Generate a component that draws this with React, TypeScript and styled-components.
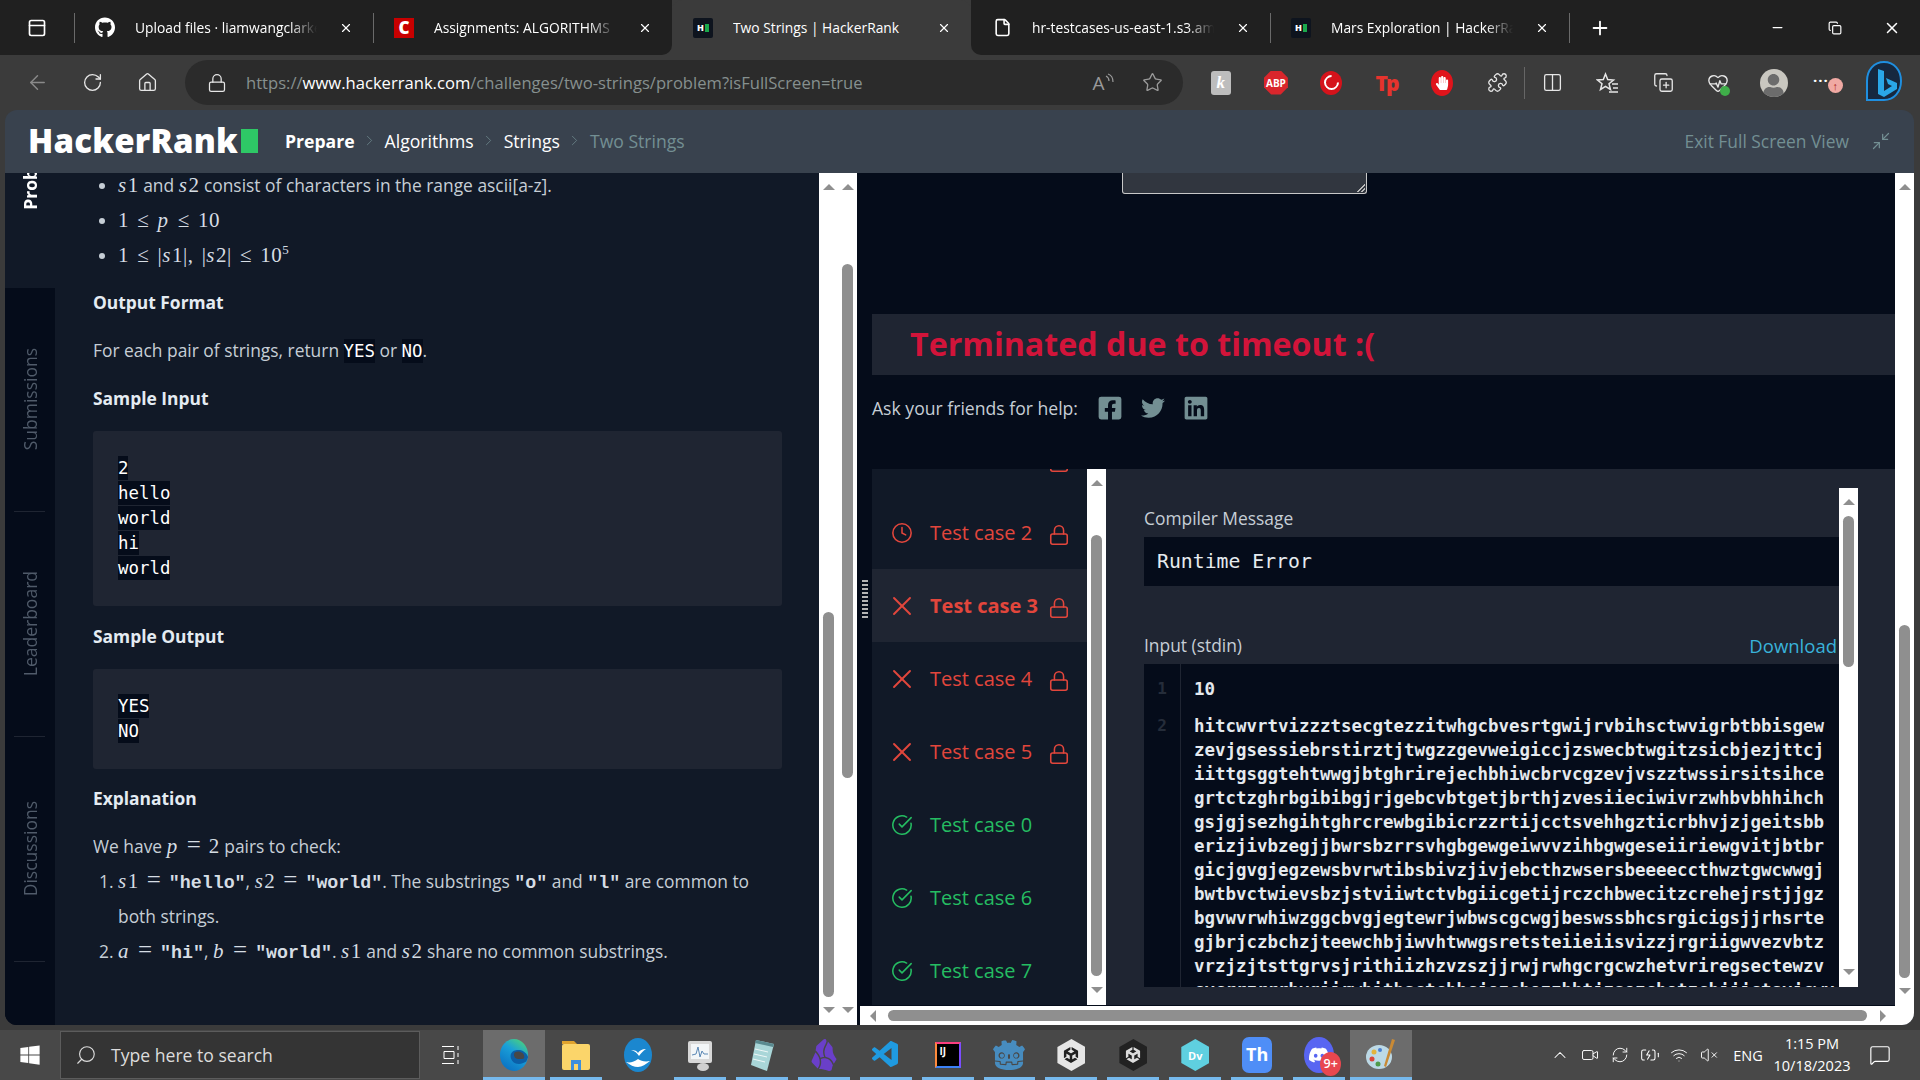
import * as React from 'react';
import styled, { createGlobalStyle } from 'styled-components';
import {
  ArrowLeft, RotateCw, Home, Lock, Star, Puzzle, Columns2, Plus, Minus, X, Copy,
  Clock, CircleCheckBig, ChevronRight, Minimize2, File, PanelTop, Search, ChevronUp,
  Video, Wifi, VolumeX, MessageSquare, HeartPulse, CopyPlus, BatteryCharging, RefreshCw,
} from 'lucide-react';
import { FaGithub, FaWindows, FaFacebookSquare, FaTwitter, FaLinkedin, FaHandPaper, FaUser } from 'react-icons/fa';
import { SiObsidian, SiGodotengine, SiUnity, SiDiscord } from 'react-icons/si';
import { VscVscode } from 'react-icons/vsc';

const chrome = '#3b3b3b';
const chromeDark = '#202020';
const pane = '#111927';
const ink = '#050c1a';
const raised = '#1f2532';
const muted = '#738f93';
const body = '#c6ced6';
const red = '#e2463c';
const green = '#25bd62';
const sans = '"Open Sans", "Noto Sans", sans-serif';
const mono = '"DejaVu Sans Mono", "Liberation Mono", monospace';
const serif = '"Liberation Serif", serif';

const GlobalStyle = createGlobalStyle`
  html, body { margin: 0; height: 100%; background: ${chrome}; overflow: hidden; }
  * { box-sizing: border-box; }
`;

const Screen = styled.div`
  width: 1920px;
  height: 1080px;
  display: flex;
  flex-direction: column;
  font-family: ${sans};
  overflow: hidden;
`;

/* browser tab strip */
const TabBar = styled.div`
  height: 55px;
  display: flex;
  flex: none;
  color: #fff;
`;
const SideSlot = styled.div`
  width: 74px;
  display: flex;
  align-items: center;
  justify-content: center;
  background: ${chromeDark};
`;
const Tab = styled.div<{ $active?: boolean; $sep?: boolean; $roundL?: boolean; $roundR?: boolean }>`
  position: relative;
  width: 299px;
  display: flex;
  align-items: center;
  padding: 0 20px 0 21px;
  background: ${(p) => (p.$active ? chrome : chromeDark)};
  border-radius: ${(p) => (p.$active ? '10px 10px 0 0' : '0')};
  border-bottom-right-radius: ${(p) => (p.$roundR ? '10px' : '')};
  border-bottom-left-radius: ${(p) => (p.$roundL ? '10px' : '')};
  &::before {
    content: '';
    display: ${(p) => (p.$sep ? 'block' : 'none')};
    position: absolute;
    left: 0;
    top: 13px;
    height: 30px;
    width: 1px;
    background: #6a6a6a;
  }
`;
const TabIcon = styled.div`
  width: 20px;
  height: 20px;
  flex: none;
  display: flex;
  align-items: center;
  justify-content: center;
  margin-right: 20px;
`;
const TabTitle = styled.div<{ $fade?: boolean }>`
  flex: 1;
  font-size: 13.8px;
  white-space: nowrap;
  overflow: hidden;
  margin-right: 22px;
  mask-image: ${(p) => (p.$fade ? 'linear-gradient(90deg, #000 85%, transparent)' : 'none')};
`;
const HrIcon = styled.div`
  width: 20px;
  height: 20px;
  background: #0e141e;
  border-radius: 2px;
  display: flex;
  align-items: center;
  justify-content: center;
  gap: 1px;
  font: 800 9px ${sans};
  color: #fff;
  &::after {
    content: '';
    width: 4px;
    height: 8px;
    background: #1ba94c;
  }
`;
const CanvasIcon = styled.div`
  width: 20px;
  height: 20px;
  background: #c80000;
  color: #fff;
  font: 800 17px/20px ${sans};
  text-align: center;
`;
const NewTab = styled.div`
  width: 62px;
  display: flex;
  align-items: center;
  justify-content: center;
  position: relative;
  background: ${chromeDark};
  &::before {
    content: '';
    position: absolute;
    left: 0;
    top: 13px;
    height: 30px;
    width: 1px;
    background: #6a6a6a;
  }
`;
const TabFill = styled.div`
  flex: 1;
  background: ${chromeDark};
`;
const WinButton = styled.div`
  width: 57px;
  display: flex;
  align-items: center;
  justify-content: center;
  background: ${chromeDark};
`;

/* address bar row */
const Toolbar = styled.div`
  height: 55px;
  flex: none;
  display: flex;
  align-items: center;
  padding-left: 10px;
  color: #e6e6e6;
`;
const NavButton = styled.div<{ $dim?: boolean }>`
  width: 55px;
  display: flex;
  justify-content: center;
  color: ${(p) => (p.$dim ? '#8a8a8a' : '#e6e6e6')};
`;
const Address = styled.div`
  margin-left: 10px;
  width: 998px;
  height: 45px;
  border-radius: 23px;
  background: #2b2b2b;
  display: flex;
  align-items: center;
  padding: 0 6px 0 22px;
`;
const Url = styled.div`
  flex: 1;
  margin-left: 19px;
  font-size: 16.6px;
  color: #86908f;
  white-space: nowrap;
  b {
    font-weight: 400;
    color: #fff;
  }
`;
const AddressAction = styled.div`
  width: 49px;
  display: flex;
  justify-content: center;
  align-items: flex-end;
  color: #9a9a9a;
  font-size: 19px;
  line-height: 24px;
`;
const ExtRow = styled.div`
  margin-left: 10px;
  display: flex;
`;
const Ext = styled.div<{ $sep?: boolean }>`
  position: relative;
  width: 55.3px;
  height: 40px;
  display: flex;
  align-items: center;
  justify-content: center;
  &::after {
    content: '';
    display: ${(p) => (p.$sep ? 'block' : 'none')};
    position: absolute;
    right: 0;
    top: 4px;
    bottom: 4px;
    width: 1px;
    background: #666;
  }
`;
const KeyIcon = styled.div`
  width: 20px;
  height: 24px;
  border-radius: 3px;
  background: #bdbdbd;
  color: #fff;
  font: italic 700 17px/24px ${serif};
  text-align: center;
`;
const AbpIcon = styled.div`
  width: 24px;
  height: 24px;
  background: #d9262c;
  clip-path: polygon(30% 0, 70% 0, 100% 30%, 100% 70%, 70% 100%, 30% 100%, 0 70%, 0 30%);
  color: #fff;
  font: 700 10px/24px ${sans};
  text-align: center;
`;
const RedBadge = styled.div`
  width: 22px;
  height: 24px;
  border-radius: 50%;
  background: #d5131b;
  display: flex;
  align-items: center;
  justify-content: center;
  &::after {
    content: '';
    width: 11px;
    height: 11px;
    border-radius: 50%;
    border: 2.5px solid #fff;
    border-right-color: transparent;
    transform: rotate(-45deg);
  }
`;
const TpIcon = styled.div`
  color: #e6332d;
  font: 800 21px/24px ${sans};
  letter-spacing: -2px;
`;
const HandIcon = styled.div`
  width: 22px;
  height: 26px;
  border-radius: 50%;
  background: #e0141b;
  color: #fff;
  display: flex;
  align-items: center;
  justify-content: center;
`;
const HealthIcon = styled.div`
  position: relative;
  display: flex;
  &::after {
    content: '';
    position: absolute;
    right: -1px;
    bottom: -2px;
    width: 10px;
    height: 10px;
    border-radius: 50%;
    background: #3fae49;
  }
`;
const Avatar = styled.div`
  width: 28px;
  height: 28px;
  border-radius: 50%;
  background: #c9c7c0;
  color: #6c6c6c;
  overflow: hidden;
  display: flex;
  align-items: flex-end;
  justify-content: center;
`;
const MoreDots = styled.div`
  position: relative;
  color: #fff;
  font: 700 15px/10px ${sans};
  letter-spacing: 1px;
  margin: -6px 8px 0 -8px;
`;
const UpdateBadge = styled.div`
  position: absolute;
  right: -14px;
  top: 3px;
  width: 15px;
  height: 15px;
  border-radius: 50%;
  background: #f0a9a3;
  color: #a22;
  font: 700 11px/15px ${sans};
  letter-spacing: 0;
  text-align: center;
`;

/* hackerrank window */
const Page = styled.div`
  width: 1909px;
  height: 915px;
  margin-left: 5px;
  flex: none;
  display: flex;
  flex-direction: column;
  border-radius: 12px;
  overflow: hidden;
`;
const Header = styled.header`
  height: 63px;
  flex: none;
  background: #39424e;
  display: flex;
  align-items: center;
  padding: 0 23px 2px 23px;
`;
const Logo = styled.div`
  display: flex;
  align-items: center;
  color: #fff;
  font: 800 33px/1 ${sans};
  letter-spacing: 0.2px;
  margin-right: 27px;
  &::after {
    content: '';
    width: 17px;
    height: 24px;
    margin-left: 3px;
    background: #2ec866;
  }
`;
const Crumb = styled.span<{ $bold?: boolean; $dim?: boolean }>`
  color: ${(p) => (p.$dim ? muted : '#fff')};
  font-size: 17.6px;
  font-weight: ${(p) => (p.$bold ? 700 : 400)};
`;
const CrumbArrow = styled.span`
  display: flex;
  margin: 0 6.5px;
  color: ${muted};
`;
const HeaderFill = styled.div`
  flex: 1;
`;
const ExitLink = styled.span`
  color: ${muted};
  font-size: 17.4px;
  margin-right: 22px;
`;
const Content = styled.div`
  flex: 1;
  min-height: 0;
  display: flex;
  background: ${ink};
`;

/* vertical tabs on the far left */
const SideNav = styled.nav`
  width: 50px;
  flex: none;
  display: flex;
  flex-direction: column;
  background: ${ink};
`;
const ActiveSide = styled.div`
  height: 115px;
  flex: none;
  overflow: hidden;
  background: ${pane};
  display: flex;
  align-items: flex-end;
  justify-content: center;
  padding-bottom: 78px;
`;
const SideLabel = styled.div<{ $active?: boolean }>`
  writing-mode: vertical-rl;
  transform: rotate(180deg);
  white-space: nowrap;
  font-size: 17.5px;
  font-weight: ${(p) => (p.$active ? 700 : 400)};
  color: ${(p) => (p.$active ? '#fff' : '#505b6a')};
`;
const SideItem = styled.div`
  height: 225px;
  flex: none;
  border-bottom: 1px solid transparent;
  position: relative;
  display: flex;
  align-items: center;
  justify-content: center;
  padding-bottom: 2px;
  &::after {
    content: '';
    position: absolute;
    left: 9px;
    right: 10px;
    bottom: 0;
    height: 1px;
    background: #1f2532;
  }
`;

/* problem statement */
const Statement = styled.div`
  width: 764px;
  flex: none;
  overflow: hidden;
  background: ${pane};
  padding: 0 37px 0 38px;
  color: ${body};
  font-size: 17.4px;
  line-height: 35px;
`;
const BulletList = styled.ul`
  margin: -5px 0 0;
  padding-left: 25px;
`;
const NumberList = styled.ol`
  margin: 0;
  padding-left: 25px;
`;
const Heading = styled.h4`
  margin: 12px 0 13px;
  font-size: 17.4px;
  line-height: 35px;
  font-weight: 700;
  color: #e4ebf2;
`;
const Para = styled.p`
  margin: 13px 0 0;
`;
const Code = styled.code`
  font-family: ${mono};
  font-size: 17.4px;
  color: #fff;
  background: ${ink};
  padding: 2px 0;
`;
const SampleBox = styled.pre`
  margin: 15px 0 12.5px;
  padding: 25px;
  background: ${raised};
  border-radius: 3px;
  font-family: ${mono};
  font-size: 17.4px;
  line-height: 25px;
  color: #fff;
  span {
    background: ${ink};
    padding: 2px 0;
  }
`;
const M = styled.span`
  font-family: ${serif};
  font-size: 21px;
  line-height: 0;
  word-spacing: 2.5px;
  letter-spacing: 0.5px;
  color: #d6dde4;
  i {
    padding-right: 1px;
  }
  sup {
    font-size: 13px;
    line-height: 0;
  }
`;
const Eq = styled.span`
  font-family: ${serif};
  font-size: 25px;
  line-height: 0;
  margin: 0 8px;
  color: #d6dde4;
`;
const Tt = styled.span`
  font-family: "Liberation Mono", monospace;
  font-weight: 700;
  font-size: 18.3px;
  line-height: 0;
  color: #d6dde4;
`;

/* scrollbars */
const VBar = styled.div`
  width: 19px;
  flex: none;
  background: #fff;
  display: flex;
  flex-direction: column;
  align-items: center;
  padding: 11px 0 12px;
`;
const Arrow = styled.div<{ $dir: 'up' | 'down' | 'left' | 'right' }>`
  flex: none;
  width: 0;
  height: 0;
  border: 6px solid transparent;
  ${(p) =>
    p.$dir === 'up'
      ? `border-bottom: 6px solid #8f8f8f; border-top: 0;`
      : p.$dir === 'down'
      ? `border-top: 6px solid #8f8f8f; border-bottom: 0;`
      : p.$dir === 'left'
      ? `border-right: 6px solid #8f8f8f; border-left: 0;`
      : `border-left: 6px solid #8f8f8f; border-right: 0;`}
`;
const Track = styled.div`
  flex: 1;
  min-height: 0;
  width: 100%;
  display: flex;
  justify-content: center;
`;
const Thumb = styled.div<{ $top: number; $size: number }>`
  width: 11px;
  height: ${(p) => p.$size}px;
  margin-top: ${(p) => p.$top}px;
  border-radius: 6px;
  background: #8f8f8f;
`;
const HBar = styled.div`
  height: 19px;
  flex: none;
  margin-left: 3px;
  background: #fff;
  display: flex;
  align-items: center;
  padding: 0 28px 0 10px;
`;
const HThumb = styled.div`
  flex: 1;
  height: 11px;
  margin: 0 13px 0 12px;
  border-radius: 6px;
  background: #8f8f8f;
`;
const ScrollBar = ({ top, size }: { top: number; size: number }) => (
  <VBar>
    <Arrow $dir="up" />
    <Track>
      <Thumb $top={top} $size={size} />
    </Track>
    <Arrow $dir="down" />
  </VBar>
);

/* right hand column */
const Editor = styled.div`
  flex: 1;
  min-width: 0;
  display: flex;
  flex-direction: column;
`;
const EditorRow = styled.div`
  flex: 1;
  min-height: 0;
  display: flex;
`;
const EditorScroll = styled.div`
  flex: 1;
  min-width: 0;
  display: flex;
  flex-direction: column;
  overflow: hidden;
`;
const CustomInput = styled.div`
  width: 245px;
  height: 21px;
  flex: none;
  margin-left: 265px;
  position: relative;
  background: #31363f;
  border: 1px solid #c8c8c8;
  border-top: 0;
  border-radius: 0 0 3px 3px;
  &::after {
    content: '';
    position: absolute;
    right: 1px;
    bottom: 1px;
    width: 8px;
    height: 8px;
    background: linear-gradient(135deg, transparent 50%, #bbb 50%, #bbb 60%, transparent 60%, transparent 75%, #bbb 75%, #bbb 85%, transparent 85%);
  }
`;
const StatusBand = styled.div`
  height: 61px;
  flex: none;
  margin: 120px 0 0 15px;
  background: ${raised};
  padding: 0 0 2px 38px;
  display: flex;
  align-items: center;
  color: #d2143a;
  font-size: 32.2px;
  font-weight: 700;
`;
const ShareRow = styled.div`
  height: 24px;
  flex: none;
  margin: 21px 0 0 15px;
  display: flex;
  align-items: center;
  font-size: 17.6px;
  color: ${body};
  svg {
    color: ${muted};
    margin-right: 18px;
  }
  span {
    margin-right: 19px;
  }
`;
const ResultRow = styled.div`
  height: 536px;
  flex: none;
  margin-top: 49px;
  display: flex;
`;
const Handle = styled.div`
  width: 15px;
  flex: none;
  display: flex;
  justify-content: center;
  padding-top: 111px;
  &::after {
    content: '';
    width: 6px;
    height: 38px;
    background: repeating-linear-gradient(0deg, #b4b4b4 0 2px, transparent 2px 4px);
    border-left: 0;
  }
`;
const CaseList = styled.div`
  width: 215px;
  flex: none;
  overflow: hidden;
  background: ${pane};
`;
const CaseRow = styled.div<{ $state: 'fail' | 'pass'; $selected?: boolean; $first?: boolean }>`
  height: 73px;
  margin-top: ${(p) => (p.$first ? '-46px' : '0')};
  display: flex;
  align-items: center;
  padding-left: 20px;
  background: ${(p) => (p.$selected ? raised : 'transparent')};
  color: ${(p) => (p.$state === 'fail' ? red : green)};
  font-size: 20px;
  font-weight: ${(p) => (p.$selected ? 700 : 400)};
`;
const CaseIcon = styled.div`
  width: 20px;
  display: flex;
  justify-content: center;
  margin-right: 18px;
  svg {
    flex: none;
  }
`;
const CaseName = styled.div`
  width: 118px;
  white-space: nowrap;
`;
const CaseLock = styled.div`
  display: flex;
  margin-top: 4px;
`;
const Detail = styled.div`
  flex: 1;
  min-width: 0;
  display: flex;
  background: ${raised};
  padding: 19px 37px 18px 38px;
`;
const DetailBody = styled.div`
  flex: 1;
  min-width: 0;
  display: flex;
  flex-direction: column;
  overflow: hidden;
`;
const FieldLabel = styled.div<{ $gap: number }>`
  height: 24px;
  flex: none;
  margin-top: ${(p) => p.$gap}px;
  display: flex;
  justify-content: space-between;
  align-items: center;
  font-size: 17.4px;
  color: ${body};
`;
const Download = styled.span`
  color: #39b3da;
  font-size: 18.5px;
  margin-right: 2px;
`;
const CompilerBox = styled.div`
  height: 49px;
  flex: none;
  margin-top: 7px;
  background: ${ink};
  padding-left: 13px;
  display: flex;
  align-items: center;
  font: 19.8px ${mono};
  color: #e6ebef;
  white-space: pre;
`;
const CodeBox = styled.div`
  flex: 1;
  min-height: 0;
  margin-top: 7px;
  background: ${ink};
  overflow: hidden;
`;
const CodeLine = styled.div`
  display: flex;
`;
const LineNo = styled.div`
  width: 37px;
  flex: none;
  padding-top: 13px;
  border-right: 1px solid ${raised};
  text-align: center;
  font: 700 16px/24px ${mono};
  color: #252d3a;
`;
const LineText = styled.div`
  padding: 13px 0 0 13px;
  font: 700 17.45px/24px ${mono};
  color: #e4e9ee;
  white-space: pre;
`;

/* windows task bar */
const Taskbar = styled.div`
  height: 50px;
  flex: none;
  margin-top: 5px;
  padding-right: 15px;
  display: flex;
  align-items: center;
  background: #484848;
  color: #fff;
`;
const StartButton = styled.div`
  width: 60px;
  display: flex;
  justify-content: center;
`;
const SearchBox = styled.div`
  width: 360px;
  height: 48px;
  display: flex;
  align-items: center;
  padding-left: 14px;
  background: #343434;
  border: 1px solid #5c5c5c;
  color: #dcdcdc;
  font-size: 17.6px;
  svg {
    transform: scaleX(-1);
  }
  span {
    margin-left: 14px;
  }
`;
const TaskView = styled.div`
  width: 63px;
  display: flex;
  justify-content: center;
`;
const TaskItem = styled.div<{ $active?: boolean; $running?: boolean }>`
  width: 61.95px;
  height: 50px;
  display: flex;
  align-items: center;
  justify-content: center;
  position: relative;
  background: ${(p) => (p.$active ? '#6c6c6c' : 'transparent')};
  &::after {
    content: '';
    display: ${(p) => (p.$running ? 'block' : 'none')};
    position: absolute;
    left: ${(p) => (p.$active ? '0' : '5px')};
    right: ${(p) => (p.$active ? '0' : '5px')};
    bottom: 0;
    height: 3px;
    background: #76b9ed;
  }
`;
const IjIcon = styled.div`
  width: 26px;
  height: 26px;
  background: #000;
  border: 2px solid;
  border-color: #fc3f7f #7c4dff #3b82f6 #ff8a3c;
  color: #fff;
  font: 700 10px/14px ${sans};
  padding-left: 3px;
`;
const HexBadge = styled.div<{ $color: string }>`
  width: 28px;
  height: 32px;
  background: ${(p) => p.$color};
  clip-path: polygon(50% 0, 100% 25%, 100% 75%, 50% 100%, 0 75%, 0 25%);
  display: flex;
  align-items: center;
  justify-content: center;
  color: #fff;
  font: 700 11px ${sans};
`;
const ThIcon = styled.div`
  width: 30px;
  height: 36px;
  border-radius: 7px;
  background: #4f8ef7;
  color: #fff;
  font: 700 18px/34px ${sans};
  text-align: center;
`;
const DiscordIcon = styled.div`
  position: relative;
  width: 30px;
  height: 36px;
  border-radius: 50%;
  background: #5865f2;
  color: #fff;
  display: flex;
  align-items: center;
  justify-content: center;
`;
const CountBadge = styled.div`
  position: absolute;
  right: -7px;
  bottom: -3px;
  width: 21px;
  height: 24px;
  border-radius: 50%;
  background: #e8474f;
  color: #fff;
  font: 600 12.5px/24px ${sans};
  text-align: center;
`;
const Tray = styled.div`
  margin-left: auto;
  display: flex;
  align-items: center;
`;
const TrayIcon = styled.div`
  width: 29.8px;
  display: flex;
  justify-content: center;
`;
const Lang = styled.div`
  width: 48px;
  text-align: center;
  font-size: 14.5px;
`;
const Clock2 = styled.div`
  width: 80px;
  text-align: center;
  font-size: 14.5px;
  line-height: 22px;
`;
const Notify = styled.div`
  width: 50px;
  margin-left: 3px;
  display: flex;
  justify-content: center;
`;

const EdgeLogo = ({ size }: { size: number }) => (
  <svg width={size} height={size + 4} viewBox="0 0 32 36">
    <defs>
      <linearGradient id="eg" x1="0.2" y1="1" x2="0.8" y2="0">
        <stop offset="0" stopColor="#0a6fc2" />
        <stop offset="0.6" stopColor="#1aa0d8" />
        <stop offset="1" stopColor="#4cd37a" />
      </linearGradient>
    </defs>
    <ellipse cx="16" cy="18" rx="15" ry="17" fill="url(#eg)" />
    <path d="M31 20c-3-7-9-8-13-7-6 1-7 7-4 11 3 4 9 5 15 1-1 2 1-2 2-5z" fill="#0b5fa8" />
    <path d="M17 15c5-2 10 1 10 5 0 2-3 3-8 2-3-1-4-5-2-7z" fill="#484848" />
  </svg>
);
const FolderLogo = () => (
  <svg width="30" height="36" viewBox="0 0 30 36">
    <path d="M1 4h12l3 3h-15z" fill="#e0a32e" />
    <rect x="1" y="7" width="28" height="26" rx="2" fill="#fbd56a" />
    <path d="M10 33V23h10v10h-3v-6h-4v6z" fill="#3d8fdc" />
  </svg>
);
const BirdLogo = () => (
  <svg width="30" height="36" viewBox="0 0 30 36">
    <ellipse cx="15" cy="18" rx="14" ry="17" fill="#1b87cf" />
    <path d="M8 13c4 0 6 1 7 3 1-2 4-4 8-4-3 2-5 4-7 7-2-3-4-5-8-6zM3 25c4 1 8 0 12-3 3 2 7 3 12 2-4 3-8 6-12 6s-8-2-12-5z" fill="#fff" />
  </svg>
);
const MonitorLogo = () => (
  <svg width="30" height="36" viewBox="0 0 30 36">
    <rect x="3" y="4" width="24" height="22" rx="2" fill="#d8d8d8" />
    <rect x="6" y="7" width="18" height="15" fill="#f3f6f8" />
    <path d="M7 18l4-1 2-7 2 10 2-6 2 3 4 0" stroke="#5b88b5" fill="none" />
    <ellipse cx="18" cy="30" rx="6" ry="4" fill="#cfcfcf" />
  </svg>
);
const NoteLogo = () => (
  <svg width="30" height="36" viewBox="0 0 30 36">
    <path d="M9 3l18 4-7 27-16-6z" fill="#a9d6d8" />
    <path d="M9 3l18 4-1 3-18-4z" fill="#5a8a90" />
    <path d="M8 12l13 3M7 17l13 3M6 22l12 3" stroke="#eef7f7" />
  </svg>
);
const PaletteLogo = () => (
  <svg width="32" height="36" viewBox="0 0 32 36">
    <ellipse cx="14" cy="20" rx="13" ry="12" fill="#bcd9e6" />
    <circle cx="9" cy="15" r="2.5" fill="#e3b33c" />
    <circle cx="7" cy="22" r="2.5" fill="#d9453a" />
    <circle cx="13" cy="27" r="2.5" fill="#4f9a4a" />
    <circle cx="15" cy="13" r="2" fill="#4a7fd0" />
    <path d="M27 2l3 1-9 27-2-1z" fill="#c98a35" />
  </svg>
);
const BingLogo = () => (
  <svg width="40" height="46" viewBox="0 0 40 46">
    <path d="M20 2c10 0 17 8 17 19s-7 19-17 19H3V21C3 10 10 2 20 2z" fill="#16283f" stroke="#1f8fe0" strokeWidth="2" />
    <path d="M14 9l6 2v20l8-5-4-2-2-6 11 5v6l-13 8-6-3z" fill="#2aa7e8" />
  </svg>
);
const TaskViewIcon = () => (
  <svg width="20" height="20" viewBox="0 0 20 20" fill="none" stroke="#fff">
    <path d="M0 1.5h12M0 18.5h12M2 6.5h10v7H2zM16 1v4M16 8v4M16 15v4" />
  </svg>
);
const ReadAloudWaves = () => (
  <svg width="10" height="22" viewBox="0 0 10 22" fill="none" stroke="#9a9a9a" strokeWidth="1.2">
    <path d="M1 3c2 1 3 3 3 5M3 1c3 1 5 4 5 8" />
  </svg>
);
const FavoritesIcon = () => (
  <svg width="24" height="24" viewBox="0 0 24 24" fill="none" stroke="#e6e6e6" strokeWidth="1.5">
    <path d="M9.5 3l2.2 5.6 5.8.4-4.5 3.7 1.5 5.8-5-3.2-5 3.2 1.5-5.8L1.5 9l5.8-.4z" />
    <path d="M16 13h6M17 17h5M13 21h9" />
  </svg>
);

const inputLines = [
  'hitcwvrtvizzztsecgtezzitwhgcbvesrtgwijrvbihsctwvigrbtbbisgew',
  'zevjgsessiebrstirztjtwgzzgevweigiccjzswecbtwgitzsicbjezjttcj',
  'iittgsggtehtwwgjbtghrirejechbhiwcbrvcgzevjvszztwssirsitsihce',
  'grtctzghrbgibibgjrjgebcvbtgetjbrthjzvesiieciwivrzwhbvbhhihch',
  'gsjgjsezhgihtghrcrewbgibicrzzrtijcctsvehhgzticrbhvjzjgeitsbb',
  'erizjivbzegjjbwrsbzrrsvhgbgewgeiwvvzihbgwgeseiiriewgvitjbtbr',
  'gicjgvgjegzewsbvrwtibsbivzjivjebcthzwsersbeeeeccthwztgwcwwgj',
  'bwtbvctwievsbzjstviiwtctvbgiicgetijrczchbwecitzcrehejrstjjgz',
  'bgvwvrwhiwzggcbvgjegtewrjwbwscgcwgjbeswssbhcsrgicigsjjrhsrte',
  'gjbrjczbchzjteewchbjiwvhtwwgsretsteiieiisvizzjrgriigwvezvbtz',
  'vrzjzjtsttgrvsjrithiizhzvzszjjrwjrwhgcrgcwzhetvriregsectewzv',
  'cvcrrzrrrbvgiirwhithsctchbcjezchezzhbtjzsezchetzchjjjctsvjcwv',
];

const cases = [
  { name: 'Test case 2', icon: 'clock', locked: true },
  { name: 'Test case 3', icon: 'x', locked: true, selected: true },
  { name: 'Test case 4', icon: 'x', locked: true },
  { name: 'Test case 5', icon: 'x', locked: true },
  { name: 'Test case 0', icon: 'check' },
  { name: 'Test case 6', icon: 'check' },
  { name: 'Test case 7', icon: 'check' },
];

const statusIcon = (icon: string) => {
  if (icon === 'clock') return <Clock size={22} strokeWidth={1.7} />;
  if (icon === 'x') return <X size={32} strokeWidth={1.4} />;
  return <CircleCheckBig size={22} strokeWidth={1.7} />;
};

const S1 = () => <M><i>s</i>1</M>;
const S2 = () => <M><i>s</i>2</M>;

export default function App() {
  return (
    <Screen>
      <GlobalStyle />
      <TabBar>
        <SideSlot>
          <PanelTop size={20} />
        </SideSlot>
        <Tab $sep>
          <TabIcon><FaGithub size={21} /></TabIcon>
          <TabTitle $fade>Upload files · liamwangclarke</TabTitle>
          <X size={14} />
        </Tab>
        <Tab $sep $roundR>
          <TabIcon><CanvasIcon>C</CanvasIcon></TabIcon>
          <TabTitle $fade>Assignments: ALGORITHMS</TabTitle>
          <X size={14} />
        </Tab>
        <Tab $active>
          <TabIcon><HrIcon>H</HrIcon></TabIcon>
          <TabTitle>Two Strings | HackerRank</TabTitle>
          <X size={14} />
        </Tab>
        <Tab $roundL>
          <TabIcon><File size={19} /></TabIcon>
          <TabTitle $fade>hr-testcases-us-east-1.s3.amazonaws</TabTitle>
          <X size={14} />
        </Tab>
        <Tab $sep>
          <TabIcon><HrIcon>H</HrIcon></TabIcon>
          <TabTitle $fade>Mars Exploration | HackerRank</TabTitle>
          <X size={14} />
        </Tab>
        <NewTab><Plus size={22} /></NewTab>
        <TabFill />
        <WinButton><Minus size={15} /></WinButton>
        <WinButton><Copy size={14} /></WinButton>
        <WinButton><X size={18} /></WinButton>
      </TabBar>

      <Toolbar>
        <NavButton $dim><ArrowLeft size={23} strokeWidth={1.5} /></NavButton>
        <NavButton><RotateCw size={21} strokeWidth={1.5} /></NavButton>
        <NavButton><Home size={21} strokeWidth={1.5} /></NavButton>
        <Address>
          <Lock size={20} strokeWidth={1.5} />
          <Url>https://<b>www.hackerrank.com</b>/challenges/two-strings/problem?isFullScreen=true</Url>
          <AddressAction>A<ReadAloudWaves /></AddressAction>
          <AddressAction><Star size={21} strokeWidth={1.5} /></AddressAction>
        </Address>
        <ExtRow>
          <Ext><KeyIcon>k</KeyIcon></Ext>
          <Ext><AbpIcon>ABP</AbpIcon></Ext>
          <Ext><RedBadge /></Ext>
          <Ext><TpIcon>Tp</TpIcon></Ext>
          <Ext><HandIcon><FaHandPaper size={14} /></HandIcon></Ext>
          <Ext $sep><Puzzle size={21} strokeWidth={1.5} /></Ext>
          <Ext><Columns2 size={21} strokeWidth={1.5} /></Ext>
          <Ext><FavoritesIcon /></Ext>
          <Ext><CopyPlus size={21} strokeWidth={1.5} /></Ext>
          <Ext><HealthIcon><HeartPulse size={22} strokeWidth={1.5} /></HealthIcon></Ext>
          <Ext><Avatar><FaUser size={23} /></Avatar></Ext>
          <Ext><MoreDots>···<UpdateBadge>↑</UpdateBadge></MoreDots></Ext>
          <Ext><BingLogo /></Ext>
        </ExtRow>
      </Toolbar>

      <Page>
        <Header>
          <Logo>HackerRank</Logo>
          <Crumb $bold>Prepare</Crumb>
          <CrumbArrow><ChevronRight size={17} strokeWidth={1} /></CrumbArrow>
          <Crumb>Algorithms</Crumb>
          <CrumbArrow><ChevronRight size={17} strokeWidth={1} /></CrumbArrow>
          <Crumb>Strings</Crumb>
          <CrumbArrow><ChevronRight size={17} strokeWidth={1} /></CrumbArrow>
          <Crumb $dim>Two Strings</Crumb>
          <HeaderFill />
          <ExitLink>Exit Full Screen View</ExitLink>
          <Minimize2 size={20} color={muted} strokeWidth={1.5} />
        </Header>
        <Content>
          <SideNav>
            <ActiveSide><SideLabel $active>Problem</SideLabel></ActiveSide>
            <SideItem><SideLabel>Submissions</SideLabel></SideItem>
            <SideItem><SideLabel>Leaderboard</SideLabel></SideItem>
            <SideItem><SideLabel>Discussions</SideLabel></SideItem>
          </SideNav>

          <Statement>
            <BulletList>
              <li><S1 /> and <S2 /> consist of characters in the range ascii[a-z].</li>
              <li><M>1 ≤ <i>p</i> ≤ 10</M></li>
              <li><M>1 ≤ |<i>s</i>1|, |<i>s</i>2| ≤ 10<sup>5</sup></M></li>
            </BulletList>
            <Heading>Output Format</Heading>
            <Para>For each pair of strings, return <Code>YES</Code> or <Code>NO</Code>.</Para>
            <Heading>Sample Input</Heading>
            <SampleBox>
              <span>2</span>{'\n'}<span>hello</span>{'\n'}<span>world</span>{'\n'}<span>hi</span>{'\n'}<span>world</span>
            </SampleBox>
            <Heading>Sample Output</Heading>
            <SampleBox>
              <span>YES</span>{'\n'}<span>NO</span>
            </SampleBox>
            <Heading>Explanation</Heading>
            <Para>We have <M><i>p</i></M><Eq>=</Eq><M>2</M> pairs to check:</Para>
            <NumberList>
              <li>
                <S1 /><Eq>=</Eq><Tt>"hello"</Tt>, <S2 /><Eq>=</Eq><Tt>"world"</Tt>. The substrings <Tt>"o"</Tt> and <Tt>"l"</Tt> are common to<br />both strings.
              </li>
              <li>
                <M><i>a</i></M><Eq>=</Eq><Tt>"hi"</Tt>, <M><i>b</i></M><Eq>=</Eq><Tt>"world"</Tt>. <S1 /> and <S2 /> share no common substrings.
              </li>
            </NumberList>
          </Statement>
          <ScrollBar top={422} size={385} />
          <ScrollBar top={74} size={514} />

          <Editor>
            <EditorRow>
              <EditorScroll>
                <CustomInput />
                <StatusBand>Terminated due to timeout :(</StatusBand>
                <ShareRow>
                  <span>Ask your friends for help:</span>
                  <FaFacebookSquare size={26} />
                  <FaTwitter size={24} />
                  <FaLinkedin size={26} />
                </ShareRow>
                <ResultRow>
                  <Handle />
                  <CaseList>
                    <CaseRow $state="fail" $first>
                      <CaseIcon />
                      <CaseName />
                      <CaseLock><Lock size={22} strokeWidth={1.7} /></CaseLock>
                    </CaseRow>
                    {cases.map((c) => (
                      <CaseRow key={c.name} $state={c.icon === 'check' ? 'pass' : 'fail'} $selected={c.selected}>
                        <CaseIcon>{statusIcon(c.icon)}</CaseIcon>
                        <CaseName>{c.name}</CaseName>
                        {c.locked && <CaseLock><Lock size={22} strokeWidth={1.7} /></CaseLock>}
                      </CaseRow>
                    ))}
                  </CaseList>
                  <ScrollBar top={49} size={441} />
                  <Detail>
                    <DetailBody>
                      <FieldLabel $gap={18}>Compiler Message</FieldLabel>
                      <CompilerBox>Runtime Error</CompilerBox>
                      <FieldLabel $gap={47}>
                        Input (stdin)
                        <Download>Download</Download>
                      </FieldLabel>
                      <CodeBox>
                        <CodeLine>
                          <LineNo>1</LineNo>
                          <LineText>10</LineText>
                        </CodeLine>
                        <CodeLine>
                          <LineNo>2</LineNo>
                          <LineText>{inputLines.join('\n')}</LineText>
                        </CodeLine>
                      </CodeBox>
                    </DetailBody>
                    <ScrollBar top={11} size={151} />
                  </Detail>
                </ResultRow>
              </EditorScroll>
              <ScrollBar top={435} size={353} />
            </EditorRow>
            <HBar>
              <Arrow $dir="left" />
              <HThumb />
              <Arrow $dir="right" />
            </HBar>
          </Editor>
        </Content>
      </Page>

      <Taskbar>
        <StartButton><FaWindows size={22} /></StartButton>
        <SearchBox>
          <Search size={22} strokeWidth={1.25} />
          <span>Type here to search</span>
        </SearchBox>
        <TaskView><TaskViewIcon /></TaskView>
        <TaskItem $active $running><EdgeLogo size={30} /></TaskItem>
        <TaskItem $running><FolderLogo /></TaskItem>
        <TaskItem><BirdLogo /></TaskItem>
        <TaskItem $running><MonitorLogo /></TaskItem>
        <TaskItem $running><NoteLogo /></TaskItem>
        <TaskItem $running><SiObsidian size={32} color="#6a3fc9" /></TaskItem>
        <TaskItem $running><VscVscode size={32} color="#1f9ae0" /></TaskItem>
        <TaskItem $running><IjIcon>IJ</IjIcon></TaskItem>
        <TaskItem $running><SiGodotengine size={32} color="#478cbf" /></TaskItem>
        <TaskItem $running><HexBadge $color="#e6e6e6"><SiUnity size={16} color="#222" /></HexBadge></TaskItem>
        <TaskItem $running><HexBadge $color="#222"><SiUnity size={16} color="#ddd" /></HexBadge></TaskItem>
        <TaskItem $running><HexBadge $color="#5fd0e0">Dv</HexBadge></TaskItem>
        <TaskItem $running><ThIcon>Th</ThIcon></TaskItem>
        <TaskItem $running>
          <DiscordIcon><SiDiscord size={20} /><CountBadge>9+</CountBadge></DiscordIcon>
        </TaskItem>
        <TaskItem $active $running><PaletteLogo /></TaskItem>
        <Tray>
          <TrayIcon><ChevronUp size={20} strokeWidth={1.25} /></TrayIcon>
          <TrayIcon><Video size={18} strokeWidth={1.25} /></TrayIcon>
          <TrayIcon><RefreshCw size={18} strokeWidth={1.25} /></TrayIcon>
          <TrayIcon><BatteryCharging size={20} strokeWidth={1.25} /></TrayIcon>
          <TrayIcon><Wifi size={18} strokeWidth={1.25} /></TrayIcon>
          <TrayIcon><VolumeX size={18} strokeWidth={1.25} /></TrayIcon>
          <Lang>ENG</Lang>
          <Clock2>1:15 PM<br />10/18/2023</Clock2>
          <Notify><MessageSquare size={22} strokeWidth={1.25} /></Notify>
        </Tray>
      </Taskbar>
    </Screen>
  );
}
